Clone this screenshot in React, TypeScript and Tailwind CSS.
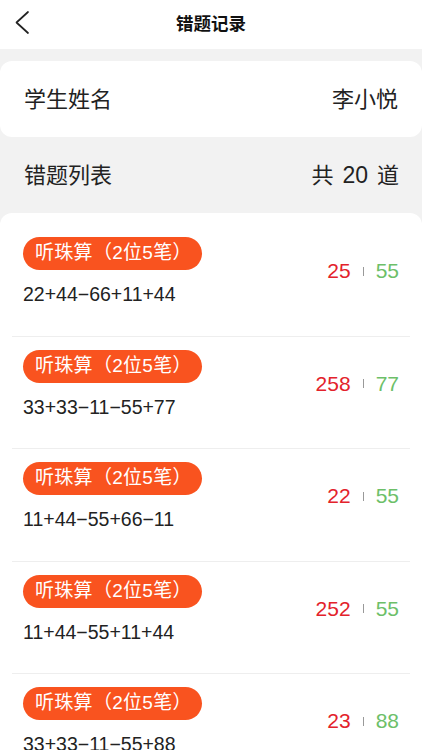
type Wrong = {
  id: number
  tag: string
  formula: string
  answer: string
  correct: string
}

const items: Wrong[] = [
  { id: 1, tag: '听珠算（2位5笔）', formula: '22+44−66+11+44', answer: '25', correct: '55' },
  { id: 2, tag: '听珠算（2位5笔）', formula: '33+33−11−55+77', answer: '258', correct: '77' },
  { id: 3, tag: '听珠算（2位5笔）', formula: '11+44−55+66−11', answer: '22', correct: '55' },
  { id: 4, tag: '听珠算（2位5笔）', formula: '11+44−55+11+44', answer: '252', correct: '55' },
  { id: 5, tag: '听珠算（2位5笔）', formula: '33+33−11−55+88', answer: '23', correct: '88' },
]

export default function App() {
  return (
    <div
      className="w-[422px] h-[750px] overflow-hidden bg-[#f2f2f2] text-[#222]"
      style={{ fontFamily: '"Liberation Sans", "Noto Sans CJK SC", sans-serif' }}
    >
      {/* header */}
      <div className="relative h-[49px] bg-white flex items-center justify-center">
        <button className="absolute left-[14px] top-[10px]">
          <svg width="16" height="25" viewBox="0 0 16 25" fill="none">
            <path d="M14 2 L2.5 12.5 L14 23" stroke="#222" strokeWidth="1.7" strokeLinecap="round" strokeLinejoin="round" />
          </svg>
        </button>
        <h1 className="text-[17.5px] font-bold text-[#111]">错题记录</h1>
      </div>

      <div className="mt-[12px] bg-white rounded-[12px] h-[76px] flex items-center justify-between px-[24px]">
        <span className="text-[22px]">学生姓名</span>
        <span className="text-[22px]">李小悦</span>
      </div>

      <div className="h-[76px] flex items-center justify-between pl-[24px] pr-[23px]">
        <span className="text-[22px]">错题列表</span>
        <span className="flex items-center gap-[9px] text-[22px]">
          <span>共</span>
          <span className="text-[23px]">20</span>
          <span>道</span>
        </span>
      </div>

      <div className="bg-white rounded-t-[12px] pt-[11px] px-[12px]">
        {items.map((item) => (
          <div
            key={item.id}
            className="flex items-center justify-between pl-[11px] pr-[11px] pt-[13px] pb-[30.5px] border-b border-[#eeeeee]"
          >
            <div>
              <span className="inline-flex items-center w-[179px] h-[33px] pl-[12px] rounded-full bg-[#f9531f] text-white text-[19px] tracking-[0.3px]">
                {item.tag}
              </span>
              <div className="mt-[13px] text-[19.5px] leading-[22px]">{item.formula}</div>
            </div>
            <div className="flex items-center text-[21px]">
              <span className="text-[#e3222b]">{item.answer}</span>
              <span className="mx-[12px] w-[1px] h-[9px] bg-[#999]" />
              <span className="text-[#6dbf69]">{item.correct}</span>
            </div>
          </div>
        ))}
      </div>
    </div>
  )
}
